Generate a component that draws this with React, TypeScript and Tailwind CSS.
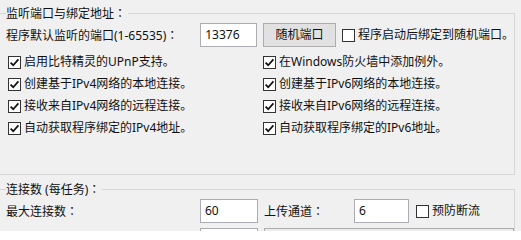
import { ReactNode } from 'react';

const font = "font-['Noto_Sans','Noto_Sans_CJK_SC',sans-serif]";

// full-width colon, centred in its cell like the Windows UI font
const Colon = () => <span className="font-['Noto_Sans_CJK_TC',sans-serif]">：</span>;

const CheckBox = ({ checked, label }: { checked: boolean; label: string }) => (
  <div className="flex items-center h-[22px]">
    <span className="w-[13px] h-[13px] border border-[#333] bg-white flex items-center justify-center shrink-0">
      {checked && (
        <svg width="11" height="11" viewBox="0 0 11 11">
          <path d="M1.6 5.6 L4.2 8.2 L9.4 2.4" fill="none" stroke="#111" strokeWidth="1.7" />
        </svg>
      )}
    </span>
    <span className="ml-[3px] whitespace-nowrap">{label}</span>
  </div>
);

const Input = ({ value, w }: { value: string; w: string }) => (
  <div className={`${w} h-[24px] bg-white border border-[#abadb3] flex items-center pl-[4px] shrink-0`}>
    {value}
  </div>
);

const Group = ({ title, className, children }: { title: ReactNode; className: string; children: ReactNode }) => (
  <div className={`relative ml-[-2px] w-[517px] border border-[#d5d5d5] ${className}`}>
    <span className="absolute left-[7px] top-[-8px] bg-[#f0f0f0] pr-[2px] leading-[14px] whitespace-nowrap">{title}</span>
    {children}
  </div>
);

export default function App() {
  return (
    <div className={`w-[521px] h-[231px] overflow-hidden bg-[#f0f0f0] text-[12px] text-[#111] ${font} pt-[13px]`}>
      <Group title={<>监听端口与绑定地址<Colon /></>} className="h-[162px] pl-[7px] pt-[9px]">
        <div className="flex items-center h-[24px]">
          <span className="w-[195px] whitespace-nowrap">程序默认监听的端口(1-65535)<Colon /></span>
          <Input value="13376" w="w-[57px]" />
          <button className="ml-[6px] w-[73px] h-[24px] bg-[#e1e1e1] border border-[#adadad] leading-none">随机端口</button>
          <div className="ml-[6px]">
            <CheckBox checked={false} label="程序启动后绑定到随机端口。" />
          </div>
        </div>
        <div className="mt-[4px] ml-[2px] grid grid-cols-[255px_1fr]">
          <CheckBox checked label="启用比特精灵的UPnP支持。" />
          <CheckBox checked label="在Windows防火墙中添加例外。" />
          <CheckBox checked label="创建基于IPv4网络的本地连接。" />
          <CheckBox checked label="创建基于IPv6网络的本地连接。" />
          <CheckBox checked label="接收来自IPv4网络的远程连接。" />
          <CheckBox checked label="接收来自IPv6网络的远程连接。" />
          <CheckBox checked label="自动获取程序绑定的IPv4地址。" />
          <CheckBox checked label="自动获取程序绑定的IPv6地址。" />
        </div>
      </Group>
      <Group title={<>连接数 (每任务)<Colon /></>} className="mt-[14px] h-[60px] pl-[7px] pt-[9px]">
        <div className="flex items-center h-[24px]">
          <span className="w-[194px] whitespace-nowrap">最大连接数<Colon /></span>
          <Input value="60" w="w-[58px]" />
          <span className="ml-[6px] w-[90px] whitespace-nowrap">上传通道<Colon /></span>
          <Input value="6" w="w-[55px]" />
          <div className="ml-[7px]">
            <CheckBox checked={false} label="预防断流" />
          </div>
        </div>
        <div className="flex mt-[5px]">
          <div className="ml-[194px] w-[58px] h-[24px] bg-white border border-[#abadb3]" />
          <div className="ml-[6px] w-[251px] h-[24px] bg-[#ececec] border border-[#adadad]" />
        </div>
      </Group>
    </div>
  );
}
